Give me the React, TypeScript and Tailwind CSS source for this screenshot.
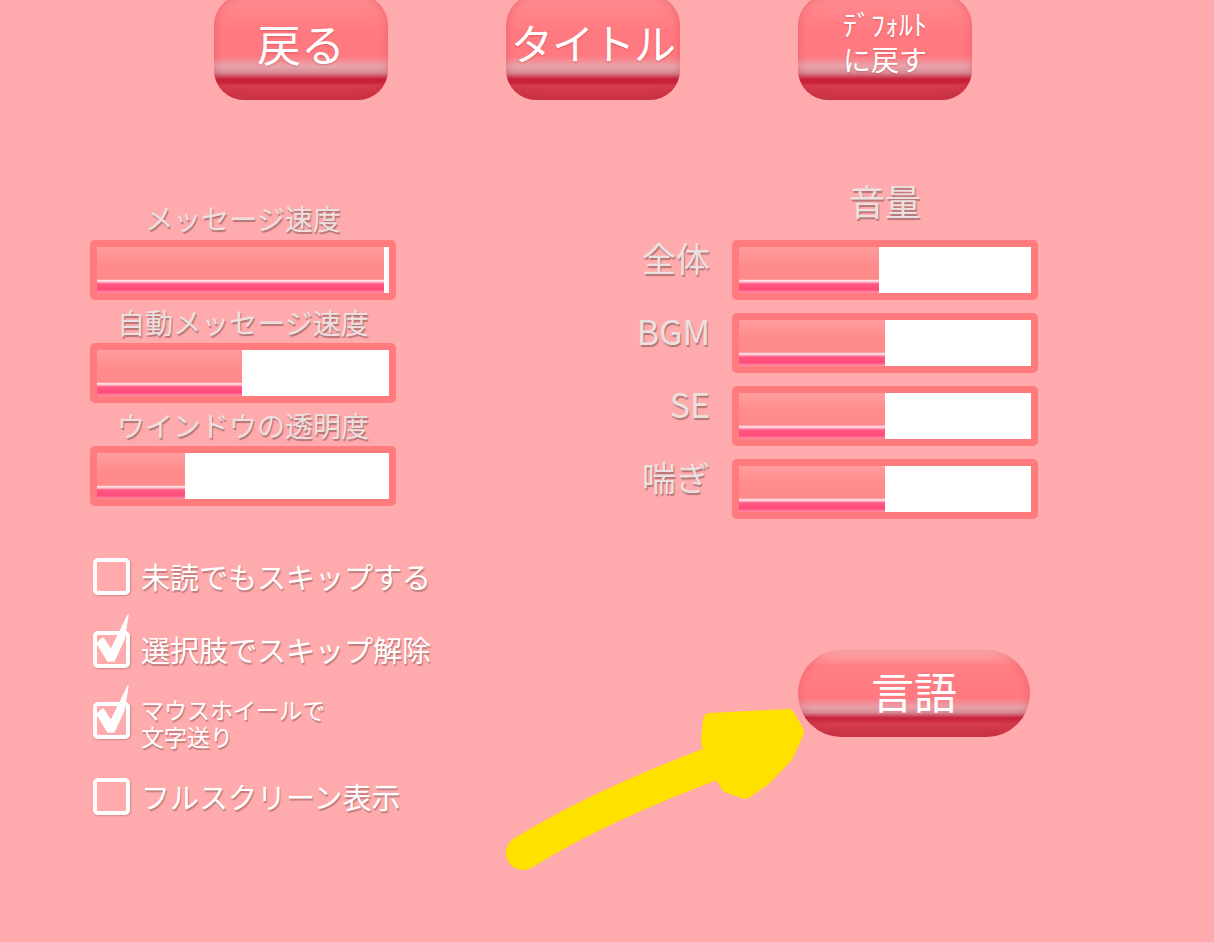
import type { ReactNode } from "react";

const topBtn =
  "flex flex-col items-center justify-center w-[174px] h-[105px] rounded-[30px] text-white bg-[linear-gradient(180deg,#ff8d92_0%,#ff7a80_35%,#ff7980_58%,#e8a4ab_68%,#d98a95_74%,#c8223c_80%,#c91f3a_83%,#d63c4c_86%,#c83246_100%)] shadow-[inset_0_0_10px_rgba(200,40,60,0.35)] [text-shadow:0_1px_2px_rgba(160,40,50,0.35)]";

const sliderLabel =
  "whitespace-nowrap text-[#ebe0e0] [text-shadow:1px_2px_1px_rgba(130,80,80,0.6)]";

const fillBg =
  "h-full bg-[linear-gradient(180deg,#ff9c9e_0%,#ff8b8b_40%,#ff8a8a_70%,#ffe2ea_73%,#ffbfcc_76%,#ff5a84_80%,#ff4a78_92%,#ff92aa_100%)]";

function Bar({ value }: { value: number }) {
  return (
    <div className="h-[60px] w-[306px] shrink-0 rounded-[5px] bg-[#ff7b7e] p-[7px]">
      <div className="flex h-full bg-white">
        <div className={fillBg} style={{ width: `${value}%` }} />
      </div>
    </div>
  );
}

function Check() {
  return (
    <svg
      className="absolute left-0 top-[-18px]"
      width="40"
      height="56"
      viewBox="0 0 40 56"
    >
      <polygon
        points="4,30 10,25 18,37 35,2 31,26 21,48 15,48"
        fill="white"
        stroke="white"
        strokeWidth="1.5"
        strokeLinejoin="round"
      />
    </svg>
  );
}

function CheckRow({
  checked,
  className,
  children,
}: {
  checked?: boolean;
  className: string;
  children: ReactNode;
}) {
  return (
    <div className={`flex h-[37px] items-center ${className}`}>
      <div className="relative ml-[3px] h-[37px] w-[37px] shrink-0">
        <div className="h-full w-full rounded-[5px] border-[4px] border-white shadow-[1px_1px_2px_rgba(150,80,80,0.4)]" />
        {checked ? <Check /> : null}
      </div>
      <div className="ml-[11px] whitespace-nowrap text-white [text-shadow:1px_2px_1px_rgba(130,80,80,0.5)]">
        {children}
      </div>
    </div>
  );
}

export default function App() {
  const volumes = [
    { label: "全体", value: 48 },
    { label: "BGM", value: 50 },
    { label: "SE", value: 50 },
    { label: "喘ぎ", value: 50 },
  ];

  return (
    <div className="relative h-[942px] w-[1214px] overflow-hidden bg-[#ffabad] font-['Noto_Sans_CJK_JP','Noto_Sans',sans-serif]">
      {/* top buttons */}
      <div className="-mt-[5px] flex gap-[118px] pl-[214px]">
        <div className={topBtn}>
          <span className="pb-[10px] text-[44px] leading-none">戻る</span>
        </div>
        <div className={topBtn}>
          <span className="pb-[12px] text-[42px] leading-none tracking-[-1px]">
            タイトル
          </span>
        </div>
        <div className={topBtn}>
          <div className="flex flex-col items-center gap-[7px] pb-[12px] text-[28px] leading-none">
            <span>ﾃﾞﾌｫﾙﾄ</span>
            <span>に戻す</span>
          </div>
        </div>
      </div>

      <div className="mt-[80px] flex">
        {/* left column */}
        <div className="ml-[90px] w-[306px] shrink-0 pt-[15px]">
          {[
            { label: "メッセージ速度", value: 98.3 },
            { label: "自動メッセージ速度", value: 49.8 },
            { label: "ウインドウの透明度", value: 30 },
          ].map((s, i) => (
            <div key={s.label}>
              <div
                className={`flex items-center justify-center text-[28px] ${
                  i === 0 ? "h-[45px]" : "h-[43px]"
                } ${sliderLabel}`}
              >
                {s.label}
              </div>
              <Bar value={s.value} />
            </div>
          ))}

          <div className="text-[29px] leading-none">
            <CheckRow className="mt-[52px]">未読でもスキップする</CheckRow>
            <CheckRow checked className="mt-[36px]">
              選択肢でスキップ解除
            </CheckRow>
            <CheckRow checked className="mt-[34px]">
              <div className="flex flex-col gap-[4px] pt-[4px] text-[23px] leading-none">
                <span>マウスホイールで</span>
                <span>文字送り</span>
              </div>
            </CheckRow>
            <CheckRow className="mt-[39px]">フルスクリーン表示</CheckRow>
          </div>
        </div>

        {/* right column */}
        <div className="ml-[224px]">
          <div className="flex">
            <div className="w-[112px]" />
            <div
              className={`flex h-[40px] w-[306px] items-center justify-center text-[36px] ${sliderLabel}`}
            >
              音量
            </div>
          </div>
          <div className="mt-[20px] flex flex-col gap-[13px]">
            {volumes.map((v) => (
              <div key={v.label} className="flex items-start gap-[22px]">
                <div
                  className={`w-[90px] text-right text-[34px] leading-[36px] ${sliderLabel}`}
                >
                  {v.label}
                </div>
                <Bar value={v.value} />
              </div>
            ))}
          </div>

          <div className="ml-[178px] mt-[131px] flex h-[87px] w-[232px] items-center justify-center rounded-full bg-[linear-gradient(180deg,#ffb0b2_0%,#ff7e84_18%,#ff7980_55%,#e8a0a8_66%,#d88a94_72%,#c8223c_78%,#cc2a40_81%,#d63c4c_85%,#c83246_100%)] shadow-[inset_0_0_10px_rgba(200,40,60,0.3)]">
            <span className="pb-[6px] text-[43px] leading-none text-white">
              言語
            </span>
          </div>
        </div>
      </div>

      {/* yellow arrow annotation */}
      <svg
        className="pointer-events-none absolute left-0 top-0"
        width="1214"
        height="942"
        viewBox="0 0 1214 942"
      >
        <path
          d="M523 853 Q 600 805 722 760"
          fill="none"
          stroke="#ffe100"
          strokeWidth="34"
          strokeLinecap="round"
        />
        <polygon
          points="710,720 788,716 797,732 786,756 764,779 745,792 728,786 716,766 708,742"
          fill="#ffe100"
          stroke="#ffe100"
          strokeWidth="14"
          strokeLinejoin="round"
        />
      </svg>
    </div>
  );
}
